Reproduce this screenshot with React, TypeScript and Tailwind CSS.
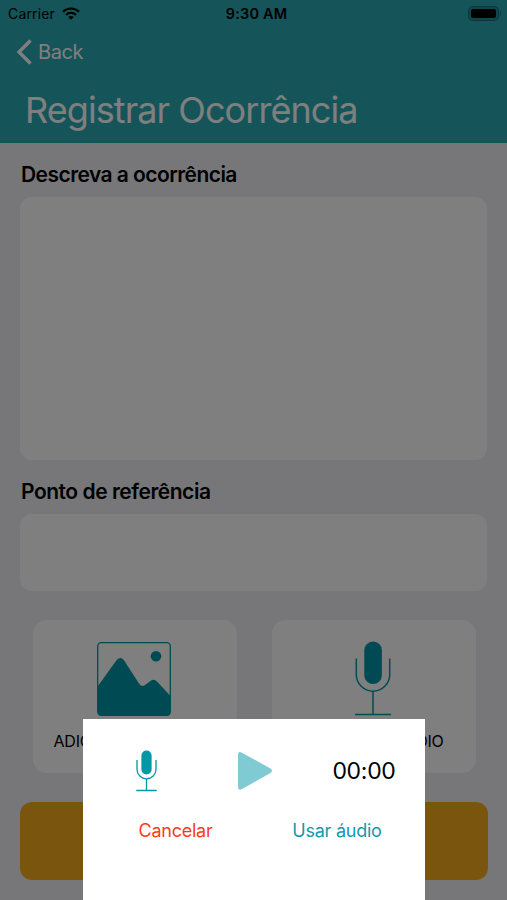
import React from 'react';

interface IconProps {
  className?: string;
}

const WifiIcon: React.FC<IconProps> = ({ className }) => (
  <svg viewBox="0 0 18 13" className={className} fill="none" stroke="black" strokeWidth="2.2">
    <path d="M1 4.7C5.5 0.4 12.5 0.4 17 4.7" />
    <path d="M4 7.9c2.9-2.6 7.1-2.6 10 0" />
    <path d="M6.2 10c1.6-1.4 4-1.4 5.6 0L9 12.8z" fill="black" stroke="none" />
  </svg>
);

const PictureIcon: React.FC<IconProps> = ({ className }) => (
  <svg viewBox="0 0 74 74" className={className} fill="#0097a7">
    <rect x="0.7" y="0.7" width="72.6" height="72.6" rx="3.5" fill="none" stroke="#0097a7" strokeWidth="1.3" />
    <circle cx="59" cy="14.3" r="5.3" />
    <path d="M1 44 19.5 18.3Q23.3 13.8 27 18.3L42 41.5Q44.3 45.5 48 43L53.5 39Q57 36.3 60 39.5L73.5 54V70Q73.5 73.5 70 73.5H4.5Q1 73.5 1 70Z" />
  </svg>
);

const MicIcon: React.FC<IconProps> = ({ className }) => (
  <svg viewBox="0 0 36 75" className={className} fill="none" stroke="#0097a7" strokeWidth="1.5">
    <rect x="9.3" y="0.5" width="17.6" height="42.5" rx="8.8" fill="#0097a7" stroke="none" />
    <path d="M1.3 17.5V33.5a16.7 16.7 0 0 0 33.4 0V17.5M18 50.2V73.3M0 73.5H36" />
  </svg>
);

const SmallMicIcon: React.FC<IconProps> = ({ className }) => (
  <svg viewBox="0 0 21 42" className={className} fill="none" stroke="#0097a7" strokeWidth="1.3">
    <rect x="5.4" y="0.5" width="10.2" height="24" rx="5.1" fill="#0097a7" stroke="none" />
    <path d="M1 10V19.3a9.5 9.5 0 0 0 19 0V10M10.5 28.8V40.5M0.3 40.5H20.7" />
  </svg>
);

const StatusBar = () => (
  <div className="grid h-[27px] grid-cols-3 items-center pr-[6px] pl-2 text-[14px] text-black">
    <div className="flex items-center gap-[7px]">
      <span className="tracking-[0.15px]">Carrier</span>
      <WifiIcon className="h-[13px] w-[18px]" />
    </div>
    <span className="pl-1 text-center text-[14.5px] font-semibold tracking-[0.2px]">9:30 AM</span>
    <div className="flex items-center justify-end gap-px">
      <div className="rounded-[5px] border border-black/25 bg-black/15 p-[2px]">
        <div className="h-[9px] w-[25px] rounded-[2px] bg-black" />
      </div>
      <div className="h-[5px] w-px rounded-r bg-black/25" />
    </div>
  </div>
);

const Header = () => (
  <header className="h-[142.5px] bg-[#2aa8b3] text-white">
    <StatusBar />
    <div className="flex h-[50px] items-center gap-[6px] pl-4">
      <svg viewBox="0 0 16 26" className="h-[26px] w-4" fill="none" stroke="white" strokeWidth="3.4">
        <path d="M14.5 1.5 3 13l11.5 11.5" />
      </svg>
      <span className="text-[20px] tracking-[-0.4px]">Back</span>
    </div>
    <h1 className="pt-[11px] pl-[25px] text-[36px] leading-[44px] tracking-[-0.93px]">Registrar Ocorrência</h1>
  </header>
);

const Attachment: React.FC<{ label: string; children: React.ReactNode }> = ({ label, children }) => (
  <button className="flex h-[153px] w-[204px] flex-col items-center rounded-[14px] bg-white pt-[21px]">
    <div className="flex h-[75px] items-end pr-[2px]">{children}</div>
    <span className="mt-[13px] text-[16px] leading-6 tracking-[-0.25px] whitespace-nowrap text-black">{label}</span>
  </button>
);

const AudioModal = () => (
  <div className="absolute top-[719px] left-[83px] h-[181px] w-[342px] bg-white">
    <div className="flex h-[103px] items-center">
      <div className="flex w-[127px] justify-center">
        <SmallMicIcon className="h-[42px] w-[21px]" />
      </div>
      <div className="flex w-[89px] justify-center">
        <svg viewBox="0 0 36 40" className="h-10 w-9" fill="#80cbd3">
          <path d="M1 4Q1-0.5 5 1.7L33.5 17.5Q36.5 19.7 33.5 22L5 38Q1 40 1 36Z" />
        </svg>
      </div>
      <div className="flex-1 pt-px pl-1 text-center text-[23px] tracking-[-0.3px] text-black">00:00</div>
    </div>
    <div className="flex h-4 items-center text-[18px] tracking-[-0.25px]">
      <button className="w-[185px] text-center text-[#ff3b20]">Cancelar</button>
      <button className="w-[138px] text-center text-[#1399aa]">Usar áudio</button>
    </div>
  </div>
);

export default function App() {
  return (
    <div className="relative h-[900px] w-[507px] overflow-hidden bg-[#efeff4] font-['Inter','Liberation_Sans',sans-serif]">
      <Header />
      <main className="flex flex-col px-5 text-black">
        <label className="mt-[17.5px] pl-px text-[21px] leading-[30px] font-semibold tracking-[-0.55px]">
          Descreva a ocorrência
        </label>
        <div className="mt-[7px] h-[263px] rounded-[12px] bg-white" />
        <label className="mt-[17px] pl-px text-[21px] leading-[30px] font-semibold tracking-[-0.47px]">
          Ponto de referência
        </label>
        <div className="mt-[7px] h-[77px] rounded-[12px] bg-white" />
        <div className="mt-[29px] flex gap-[35px] pl-[12.5px]">
          <Attachment label="ADICIONAR IMAGENS">
            <PictureIcon className="h-[74px] w-[74px]" />
          </Attachment>
          <Attachment label="ADICIONAR ÁUDIO">
            <MicIcon className="h-[75px] w-9" />
          </Attachment>
        </div>
        <div className="mt-[29px] h-[78px] w-[468px] rounded-[12px] bg-[#f5ab1c]" />
      </main>
      <div className="absolute inset-0 bg-black/50" />
      <AudioModal />
    </div>
  );
}
